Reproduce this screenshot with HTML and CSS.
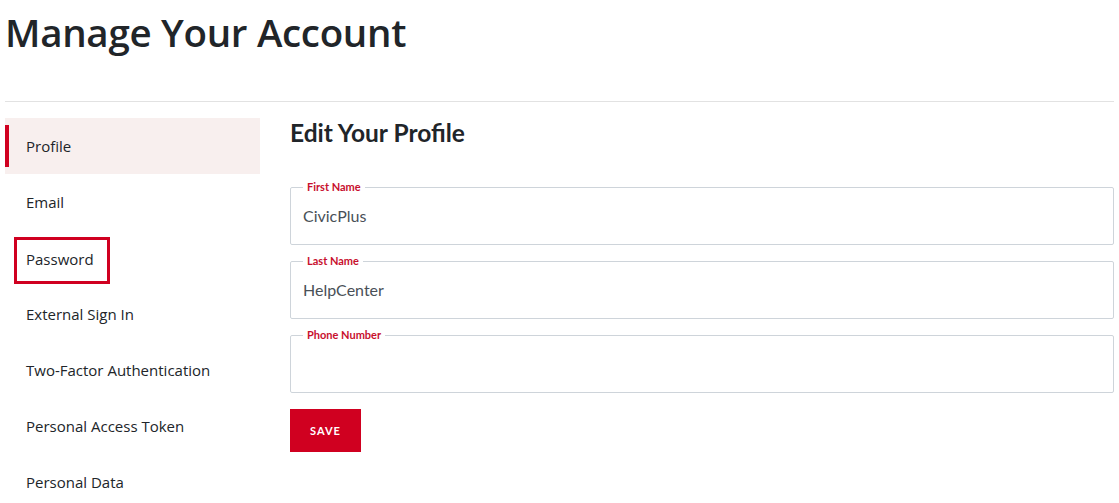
FILE: index.html
```html
<!DOCTYPE html>
<html lang="en">
<head>
<meta charset="utf-8">
<title>Manage Your Account</title>
<link rel="stylesheet" href="styles.css">
</head>
<body>
<div class="page">
  <h1 class="page-title">Manage Your Account</h1>
  <hr class="divider">
  <div class="layout">
    <nav class="sidenav">
      <ul class="nav-list">
        <li class="nav-item active"><a href="#">Profile</a></li>
        <li class="nav-item"><a href="#">Email</a></li>
        <li class="nav-item"><a href="#" class="highlight">Password</a></li>
        <li class="nav-item"><a href="#">External Sign In</a></li>
        <li class="nav-item"><a href="#">Two-Factor Authentication</a></li>
        <li class="nav-item"><a href="#">Personal Access Token</a></li>
        <li class="nav-item"><a href="#">Personal Data</a></li>
      </ul>
    </nav>
    <main class="content">
      <h2 class="section-title">Edit Your Profile</h2>
      <form class="profile-form">
        <fieldset class="field">
          <legend>First Name</legend>
          <input type="text" value="CivicPlus">
        </fieldset>
        <fieldset class="field">
          <legend>Last Name</legend>
          <input type="text" value="HelpCenter">
        </fieldset>
        <fieldset class="field">
          <legend>Phone Number</legend>
          <input type="text" value="">
        </fieldset>
        <div class="actions">
          <button type="button" class="btn-save">SAVE</button>
        </div>
      </form>
    </main>
  </div>
</div>
</body>
</html>
```
FILE: styles.css
```css
* { box-sizing: border-box; }
html, body { margin: 0; padding: 0; background: #fff; }
body {
  font-family: "Open Sans", "Noto Sans", sans-serif;
  color: #212529;
}
.page {
  padding: 0 5px;
}
.page-title {
  margin: 0;
  padding-top: 9px;
  font-size: 38.5px;
  font-weight: 600;
  line-height: 46px;
  color: #212529;
  letter-spacing: -0.3px;
}
.divider {
  margin: 46px 0 0;
  border: 0;
  border-top: 1px solid #e2e2e2;
  height: 0;
}
.layout {
  display: flex;
  gap: 30px;
  margin-top: 16px;
}
.sidenav {
  width: 255px;
  flex: none;
}
.nav-list {
  list-style: none;
  margin: 0;
  padding: 0;
}
.nav-item {
  height: 56px;
  display: flex;
  align-items: center;
  position: relative;
}
.nav-item a {
  color: #212529;
  text-decoration: none;
  font-size: 15px;
  margin-left: 21px;
}
.nav-item.active {
  background: #f8efee;
}
.nav-item.active::before {
  content: "";
  position: absolute;
  left: 0;
  top: 7px;
  bottom: 7px;
  width: 4px;
  background: #d00020;
}
.nav-item a.highlight {
  margin-left: 9px;
  margin-top: 5px;
  display: inline-flex;
  align-items: center;
  width: 96px;
  height: 47px;
  padding: 0 0 4px 9px;
  border: 3px solid #d00020;
}
.content {
  flex: 1;
  min-width: 0;
}
.section-title {
  margin: 0;
  padding-top: 1px;
  font-family: "Lato", sans-serif;
  font-size: 24.5px;
  font-weight: 700;
  line-height: 28px;
  color: #212529;
}
.profile-form {
  margin-top: 34px;
  display: flex;
  flex-direction: column;
  gap: 10px;
}
.field {
  margin: 0;
  padding: 0 12px;
  border: 1px solid #ced4da;
  border-radius: 2px;
  height: 64px;
  min-width: 0;
}
.field legend {
  font-family: "Lato", sans-serif;
  font-size: 11px;
  font-weight: 700;
  color: #c8102e;
  padding: 0 4px;
  line-height: 12px;
}
.field input {
  display: block;
  width: 100%;
  border: 0;
  outline: none;
  padding: 0;
  margin: 10px 0 0;
  font-family: "Lato", sans-serif;
  font-size: 16px;
  color: #495057;
  background: transparent;
  height: 24px;
}
.actions {
  margin-top: 6px;
}
.btn-save {
  background: #d00020;
  color: #fff;
  border: 0;
  border-radius: 0;
  width: 71px;
  height: 43px;
  font-family: "Lato", sans-serif;
  font-weight: 700;
  font-size: 11px;
  letter-spacing: 1px;
  cursor: pointer;
}
```
